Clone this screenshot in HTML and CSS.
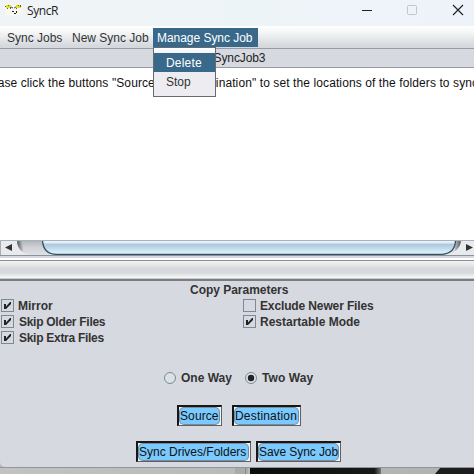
FILE: index.html
```html
<!DOCTYPE html>
<html lang="en">
<head>
<meta charset="utf-8">
<title>SyncR</title>
<link rel="stylesheet" href="styles.css">
</head>
<body>
<main class="window">
  <header class="titlebar">
    <svg class="logo" width="17" height="12" viewBox="0 0 17 12">
      <path fill="#f7f7f0" d="M0 0h17v12H0z"/>
      <path fill="#e3dc32" d="M1 1h5v3H1zM11 1h5v3h-5z"/>
      <path fill="#66622a" d="M0 2h1v1H0zM2 4h1v1H2zM5 3h1v2H5zM3 1h1v1H3zM13 1h1v1h-1zM15 1h1v2h-1zM11 4h1v1h-1z"/>
      <path stroke="#555" fill="none" d="M6 3l2 1M11 3L9 4"/>
      <path fill="#222" d="M7 7h2v1H7zM11 7h1v2h-1zM9 9h2v1H9z"/>
    </svg>
    <span class="app-name">SyncR</span>
    <svg class="controls" width="104" height="14" viewBox="0 0 104 14" fill="none">
      <path d="M2 7.500h10" stroke="#222"/>
      <rect x="47.500" y="2.500" width="9" height="9" rx="1" stroke="#c3c6c9"/>
      <path d="M93 2l10 10M103 2L93 12" stroke="#222" stroke-width="1.200"/>
    </svg>
  </header>
  <nav class="menubar">
    <span class="menu m-jobs">Sync Jobs</span>
    <span class="menu m-new">New Sync Job</span>
    <div class="menu m-manage">Manage Sync Job
      <div class="dropdown">
        <div class="item selected">Delete</div>
        <div class="item stop">Stop</div>
      </div>
    </div>
  </nav>
  <div class="job-title"><span>SyncJob3</span></div>
  <section class="log"><p>Please click the buttons "Source" and "Destination" to set the locations of the folders to sync.</p></section>
  <div class="scrollbar">
    <svg width="474" height="16" viewBox="0 0 474 16">
      <defs>
        <linearGradient id="track" x2="0" y2="1"><stop stop-color="#aeb1b6"/><stop offset=".5" stop-color="#d0d2d7"/><stop offset="1" stop-color="#dfe1e5"/></linearGradient>
        <linearGradient id="thumb" x2="0" y2="1"><stop stop-color="#f4fafd"/><stop offset=".2" stop-color="#dfeaf4"/><stop offset=".3" stop-color="#afc8dd"/><stop offset=".55" stop-color="#bfd8ea"/><stop offset="1" stop-color="#e2faff"/></linearGradient>
        <linearGradient id="shade"><stop stop-color="#555"/><stop offset="1" stop-color="#c4c6cb"/></linearGradient>
        <linearGradient id="shade-r"><stop stop-color="#bbbdc2"/><stop offset="1" stop-color="#555"/></linearGradient>
      </defs>
      <path fill="#e9eaed" d="M0 0h474v15H0z"/>
      <path fill="url(#track)" d="M17 0h443Q460 13 444 15H32Q17 14 17 0z"/>
      <path fill="url(#shade)" d="M17 0h6v12Q17 8 17 0z"/>
      <path fill="url(#shade-r)" d="M455 0h6q0 7-6 11z"/>
      <path fill="url(#thumb)" stroke="#345064" stroke-width="1.300" d="M42.500 0Q43 14.400 57 14.400H442Q455.500 13 455.500 0"/>
      <path stroke="#a5b3be" d="M0 .5h474"/>
      <path stroke="#8d929a" d="M0 15.500h474"/>
      <path stroke="#a9adb2" d="M.5 1v14"/>
      <path fill="#333" d="M5 7.500l7-3.500v7zM473 7.500L466 4v7z"/>
    </svg>
  </div>
  <div class="divider"></div>
  <section class="panel">
    <h1><span>Copy Parameters</span></h1>
    <div class="checks">
      <div class="column">
        <div class="check"><svg class="box" viewBox="0 0 13 13"><use href="#tick"/></svg><span class="t-mirror">Mirror</span></div>
        <div class="check"><svg class="box" viewBox="0 0 13 13"><use href="#tick"/></svg><span class="t-skip">Skip Older Files</span></div>
        <div class="check"><svg class="box" viewBox="0 0 13 13"><use href="#tick"/></svg><span class="t-skip">Skip Extra Files</span></div>
      </div>
      <div class="column">
        <div class="check"><svg class="box" viewBox="0 0 13 13"><rect x=".5" y=".5" width="12" height="12" fill="none" stroke="#7a8a99"/></svg><span class="t-newer">Exclude Newer Files</span></div>
        <div class="check"><svg class="box" viewBox="0 0 13 13"><g id="tick"><rect x=".5" y=".5" width="12" height="12" fill="none" stroke="#7a8a99"/><path fill="#222" d="M3 5h2v2.500L9 3h1v2L5 10H3z"/></g></svg><span class="t-restart">Restartable Mode</span></div>
      </div>
    </div>
    <div class="radios">
      <svg class="radio" viewBox="0 0 12 12"><circle cx="6" cy="6" r="5.500" fill="#dce0e7" stroke="#7a8a99"/></svg><span class="t-one">One Way</span>
      <svg class="radio" viewBox="0 0 12 12"><circle cx="6" cy="6" r="5.500" fill="#dce0e7" stroke="#7a8a99"/><circle cx="6" cy="6" r="3.200" fill="#222"/></svg><span class="t-two">Two Way</span>
    </div>
    <div class="buttons folders">
      <button class="b-source"><span>Source</span></button>
      <button class="b-dest"><span>Destination</span></button>
    </div>
    <div class="buttons actions">
      <button class="b-sync"><span>Sync Drives/Folders</span></button>
      <button class="b-save"><span>Save Sync Job</span></button>
    </div>
  </section>
  <footer class="desktop">
    <svg width="474" height="7" viewBox="0 0 474 7">
      <defs><linearGradient id="wall"><stop stop-color="#c2c2c2"/><stop offset="1" stop-color="#b1b1b1"/></linearGradient>
      <linearGradient id="dark"><stop stop-color="#0c0c0c"/><stop offset=".95" stop-color="#181818"/><stop offset="1" stop-color="#777"/></linearGradient></defs>
      <path fill="url(#wall)" d="M0 0h474v7H0z"/>
      <path fill="#aaa" d="M235 0h13v7h-13z"/><path fill="#888" d="M245 0h1v7h-1z"/>
      <path fill="url(#dark)" d="M250 0h131v7H250z"/>
      <path fill="#1d1d1d" d="M441 0h33v7h-39z"/>
      <path stroke="#939598" d="M0 .5h474"/>
    </svg>
  </footer>
</main>
</body>
</html>
```
FILE: styles.css
```css
* { box-sizing: border-box; }
body { margin: 0; overflow: hidden; font: 12px/16px "Liberation Sans", Arial, sans-serif; color: #333; }
.window { width: 474px; height: 474px; display: flex; flex-direction: column; overflow: hidden; background: #b9b9b9; }
.titlebar { height: 26px; flex: none; display: flex; align-items: flex-start; padding: 3px 10px 0 5px; background: linear-gradient(90deg, #f1f4f6, #edf4f7 50%, #eef3fa); }
.logo { margin-top: 1px; flex: none; }
.app-name { font: 12px/16px "Open Sans", "Noto Sans", sans-serif; margin-left: 5px; color: #222; letter-spacing: -.4px; }
.controls { margin-left: auto; flex: none; }
.menubar { height: 23px; flex: none; display: flex; border-bottom: 1px solid #989ba3; background: linear-gradient(#fff, #f4f5f6 30%, #d5d8dd 90%); padding: 2px 0 0 7px; }
.menu { height: 19px; line-height: 20px; white-space: nowrap; }
.m-jobs { width: 65px; }
.m-new { width: 81px; }
.m-manage { position: relative; width: 105px; padding-left: 4px; background: #39698a; color: #fff; letter-spacing: -.04px; }
.dropdown { position: absolute; z-index: 2; left: 0; top: 19px; width: 63px; height: 50px; border: 1px solid #666a71; padding-top: 5px; color: #333; background: linear-gradient(#fff, #ededf1 8px); }
.item { height: 19px; padding-left: 12px; line-height: 20px; letter-spacing: .2px; }
.selected { background: #39698a; color: #fff; }
.stop { line-height: 21px; letter-spacing: 0; }
.job-title { height: 19px; flex: none; display: flex; justify-content: center; border-bottom: 1px solid #989ba3; line-height: 19px; padding-left: 5px; background: #d6d9e0; color: #222; }
.job-title span { letter-spacing: -.1px; }
.log { height: 172px; flex: none; background: #fff; color: #111; overflow: hidden; }
.log p { margin: 7px 0 0 -20px; white-space: nowrap; letter-spacing: .1px; }
.scrollbar { height: 20px; flex: none; background: linear-gradient(#d6d9e0 0 18px, #fff 18px); }
.scrollbar svg { display: block; }
.divider { height: 21px; flex: none; border-top: 1px solid #8b8e94; border-bottom: 2px solid #7a7d84; background: linear-gradient(#f5f5f6, #d6d7da 45%, #d8d9dd 65%, #eceef1 85%, #fafafa 91%, #b0b2b8); }
.panel { height: 186px; flex: none; background: #d6d9e0; border-bottom-left-radius: 5px; font-weight: bold; }
h1 { margin: 0; height: 16px; display: flex; padding-left: 190px; font-size: 12px; line-height: 18px; }
h1 span { letter-spacing: -.02px; }
.checks { display: grid; grid-template-columns: 242px 1fr; height: 48px; padding-left: 1px; }
.check { display: flex; height: 16px; align-items: flex-start; padding-top: 2px; gap: 4px; line-height: 14px; white-space: nowrap; }
.box { width: 13px; height: 13px; flex: none; }
.t-skip { margin-left: 1px; letter-spacing: -.28px; }
.t-newer { letter-spacing: -.13px; }
.radios { height: 16px; display: flex; align-items: center; margin-top: 25px; padding-left: 164px; line-height: 18px; }
.radio { width: 12px; height: 12px; flex: none; margin-right: 5px; }
.t-one { width: 64px; }
.t-two { letter-spacing: .1px; }
.buttons { display: flex; }
.folders { padding-left: 177px; margin-top: 19px; gap: 10px; }
.actions { padding-left: 136px; margin-top: 15px; gap: 5px; }
button { width: 45px; height: 21px; padding: 1px; border: 1px solid #5e6065; border-top: 2px solid #171717; border-left: 2px solid #171717; background: #f5f6f8; display: flex; font: 12px/14px "Liberation Sans", Arial, sans-serif; color: #111; text-align: left; }
button span { width: calc(100% - 1px); height: 16px; line-height: 17px; border-radius: 4px; background: #7ac9ff; box-shadow: 0 0 0 1px #778b9c; white-space: nowrap; }
.b-source { letter-spacing: .1px; }
.b-dest { width: 69px; letter-spacing: .18px; }
.b-sync { width: 115px; }
.b-save { width: 85px; letter-spacing: -.08px; }
.desktop { height: 7px; flex: none; }
.desktop svg { display: block; }
```
